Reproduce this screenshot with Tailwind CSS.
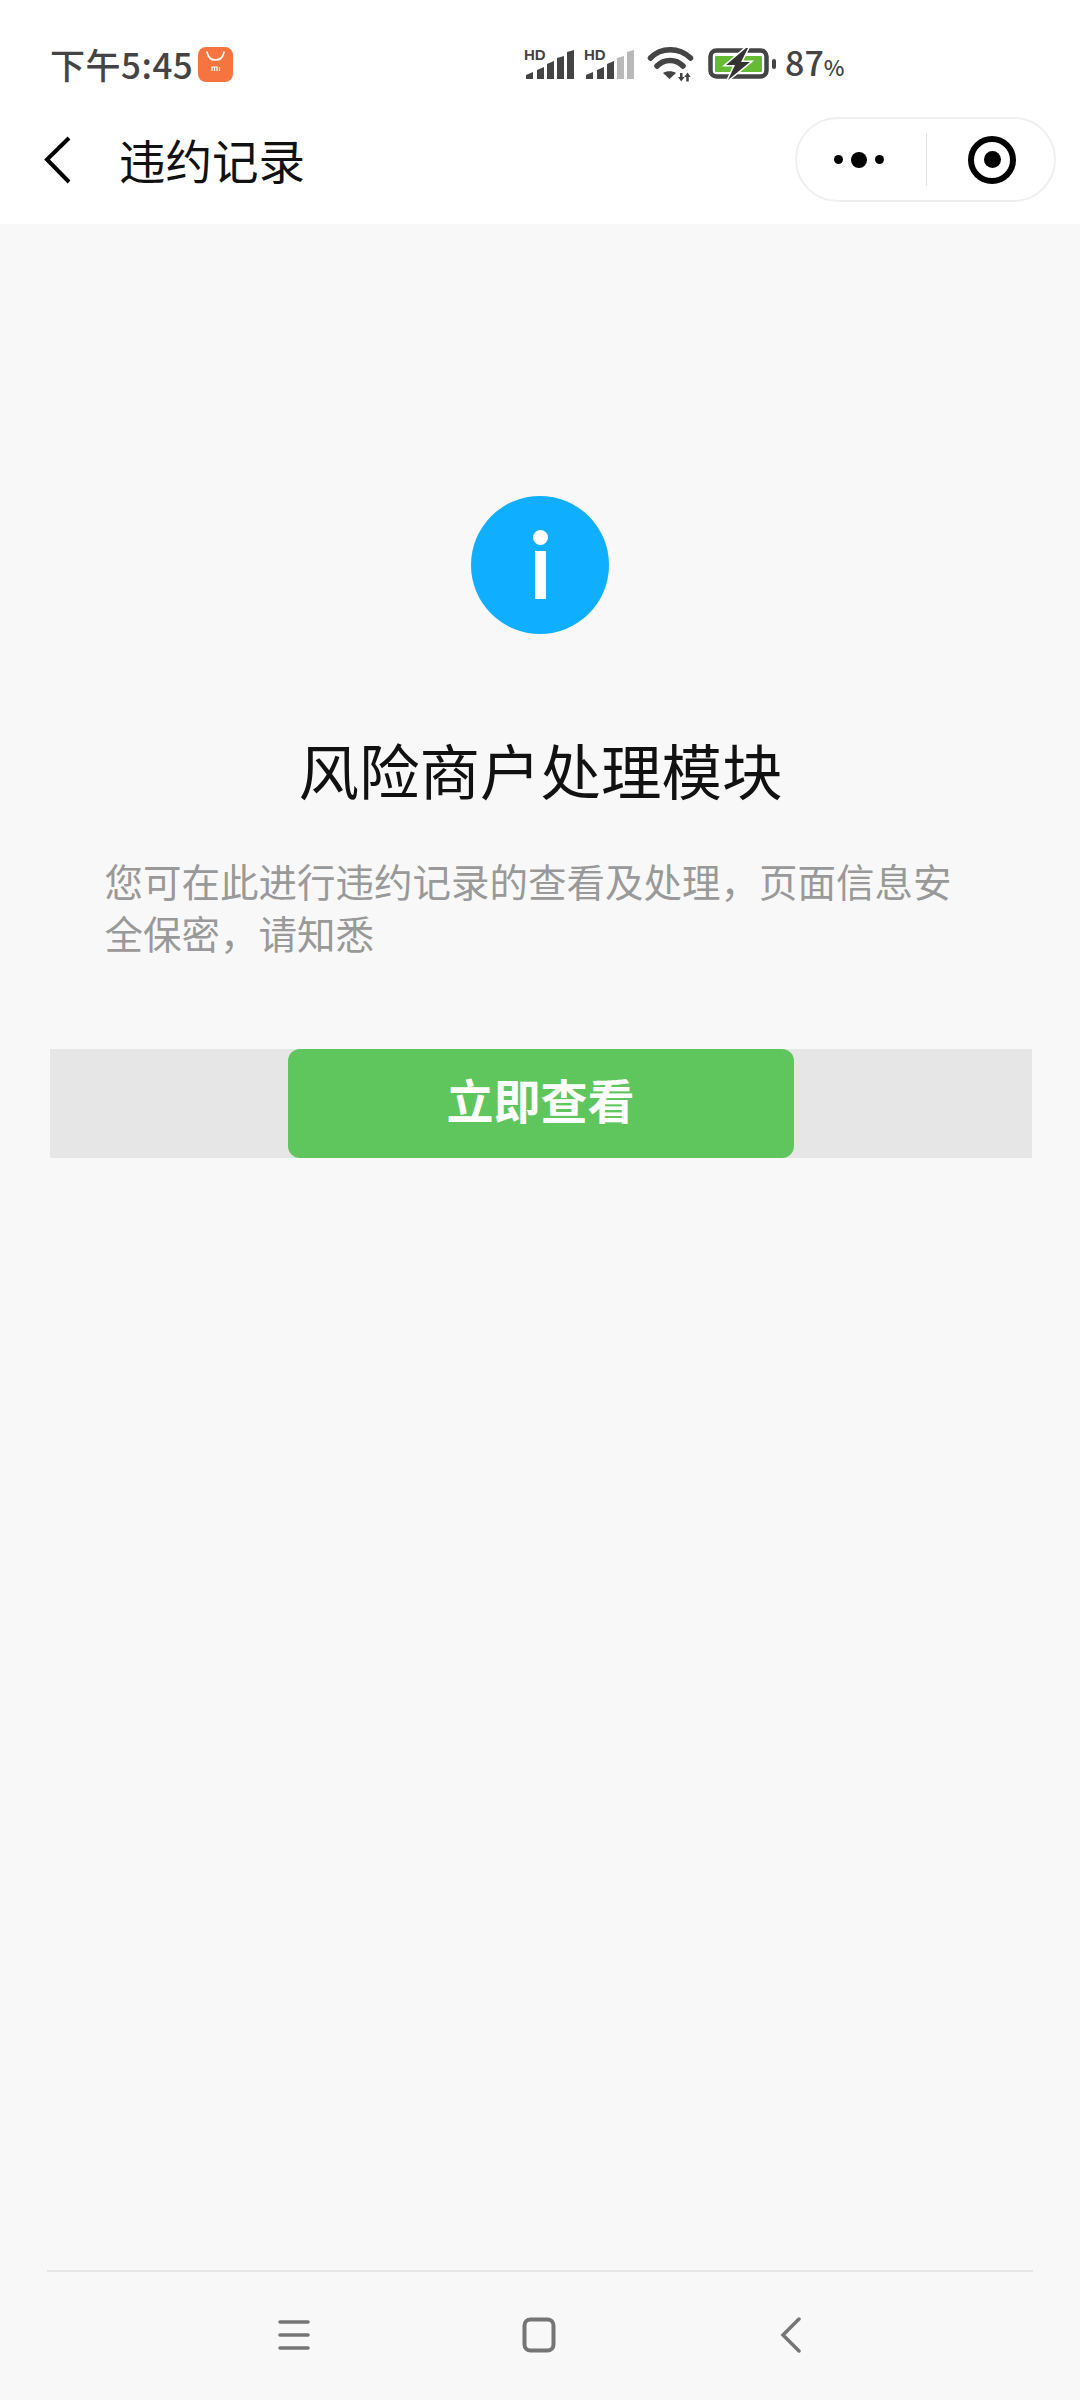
<!DOCTYPE html>
<html lang="zh-CN">
<head>
    <meta charset="UTF-8">
    <meta name="viewport" content="width=device-width, initial-scale=1.0">
    <title>违约记录</title>
    <script src="https://cdn.jsdelivr.net/npm/@tailwindcss/browser@4"></script>
</head>
<body class="bg-[#f8f8f8] font-['Noto_Sans_CJK_SC','Noto_Sans',sans-serif]">
    <div class="flex flex-col w-[1080px] h-[2400px]">

        <!-- status bar -->
        <div class="relative flex items-center h-[100px] bg-white pt-[28px] pl-[50px] text-[#444]">
            <span class="text-[35px] leading-[40px] tracking-[0.5px] font-medium">下午5:45</span>
            <svg class="ml-[5px]" width="35" height="35" viewBox="0 0 35 35">
                <rect width="35" height="35" rx="8" fill="#f57440"/>
                <path d="M9 5c1 6 4 8 8.500 8s7.500-2 8.500-8" fill="none" stroke="#fff" stroke-width="1.600" stroke-linecap="round"/>
                <path d="M14 24v-4h5v4M16.500 20v4M21.500 20v4" fill="none" stroke="#fff" stroke-width="1.200"/>
            </svg>
            <div class="flex items-start absolute left-[523px] top-[44px]">
                <svg width="52" height="36" viewBox="0 0 52 36">
                    <text x="1" y="16" font-size="15" font-weight="700" font-family="Liberation Sans" fill="#444">HD</text>
                    <g fill="#444">
                        <path d="M3 31l7-3v7H3z"/>
                        <path d="M14 26l7-3v12h-7z"/>
                        <path d="M24 20l7-3v18h-7z"/>
                        <path d="M34 14l7-2v23h-7z"/>
                        <path d="M44 8l7-2v29h-7z"/>
                    </g>
                </svg>
                <svg width="52" height="36" viewBox="0 0 52 36" class="ml-[8px]">
                    <text x="1" y="16" font-size="15" font-weight="700" font-family="Liberation Sans" fill="#444">HD</text>
                    <g fill="#444">
                        <path d="M3 31l7-3v7H3z"/>
                        <path d="M14 26l7-3v12h-7z"/>
                        <path d="M24 20l7-3v18h-7z"/>
                    </g>
                    <g fill="#b9b9b9">
                        <path d="M34 14l7-2v23h-7z"/>
                        <path d="M44 8l7-2v29h-7z"/>
                    </g>
                </svg>
                <svg width="48" height="38" viewBox="0 0 48 38" class="ml-[12px]">
                    <g fill="none" stroke="#444" stroke-width="5.500" stroke-linecap="round">
                        <path d="M3.500 14C14 3 32 3 43.500 14"/>
                        <path d="M10 22C17 14.500 29 14.500 36 22"/>
                    </g>
                    <path d="M16 29c3-2.500 10-2.500 13 0l-6.500 6z" fill="#444"/>
                    <path d="M33 29h2.500v4h2l-3.250 4.500L31 33h2zM40.500 28.500l3.250 4.500h-2v4.500h-2.500V33h-2z" fill="#444"/>
                </svg>
                <svg width="70" height="33" viewBox="0 0 70 33" class="ml-[13px] mt-[4px]">
                    <rect x="2.500" y="2.500" width="56" height="26" rx="6" fill="none" stroke="#444" stroke-width="4.500"/>
                    <rect x="7" y="8" width="47" height="16" rx="1" fill="#66bb35"/>
                    <path d="M38 0 18 17h9l-7 15 22-18h-9l7-14z" fill="#333" stroke="#fff" stroke-width="3" paint-order="stroke"/>
                    <rect x="64" y="11" width="4" height="10" rx="2" fill="#444"/>
                </svg>
                <span class="ml-[7px] text-[34px] leading-[36px] font-medium">87<span class="text-[22px]">%</span></span>
            </div>
        </div>

        <!-- nav -->
        <div class="relative flex items-center h-[124px] bg-white">
            <svg class="absolute left-[44px] top-[36px]" width="28" height="48" viewBox="0 0 28 48">
                <path d="M25 2 3 23.500 25 46" fill="none" stroke="#000" stroke-width="4"/>
            </svg>
            <span class="ml-[119px] mb-[6px] text-[46.500px] leading-[60px] text-[#111]">违约记录</span>
            <div class="absolute left-[795px] top-[17px] flex items-center w-[261px] h-[85px] rounded-full border-2 border-[#efefef] bg-white">
                <div class="flex items-center justify-center gap-[8px] w-[129px] pr-[5px]">
                    <span class="w-[9px] h-[9px] rounded-full bg-black"></span>
                    <span class="w-[16px] h-[16px] rounded-full bg-black"></span>
                    <span class="w-[9px] h-[9px] rounded-full bg-black"></span>
                </div>
                <span class="w-[1px] h-[53px] bg-[#e4e4e4]"></span>
                <div class="flex items-center justify-center flex-1 pl-[3px]">
                    <span class="flex items-center justify-center w-[48px] h-[48px] rounded-full border-[6px] border-black">
                        <span class="w-[17px] h-[17px] rounded-full bg-black"></span>
                    </span>
                </div>
            </div>
        </div>

        <!-- page content -->
        <main class="flex flex-col flex-1 items-center pt-[272px] pl-[1px]">
            <div class="flex flex-col items-center -ml-[1px] w-[138px] h-[138px] rounded-full bg-[#10aeff] pt-[34px]">
                <span class="w-[15px] h-[15px] rounded-full bg-white"></span>
                <span class="w-[11px] h-[48px] mt-[6px] bg-white"></span>
            </div>
            <h1 class="mt-[95px] text-[60.500px] leading-[80px] text-[#111]">风险商户处理模块</h1>
            <p class="mt-[45px] w-[872px] text-[38.500px] leading-[52px] text-[#999]">您可在此进行违约记录的查看及处理，页面信息安全保密，请知悉</p>
            <div class="flex justify-center mt-[91px] w-[982px] h-[109px] bg-[#e5e6e5]">
                <button class="w-[506px] h-[109px] rounded-[12px] bg-[#5fc65e] pb-[9px] text-[47px] font-bold text-white">立即查看</button>
            </div>
        </main>

        <!-- android nav bar -->
        <div class="flex items-center justify-center relative h-[130px] mx-[47px] border-t-2 border-[#e6e6e6]">
            <svg class="absolute left-[231px] top-[47px]" width="32" height="32" viewBox="0 0 32 32">
                <path d="M2 3h28M2 16h28M2 29h28" stroke="#757575" stroke-width="3.500" stroke-linecap="round"/>
            </svg>
            <svg class="absolute left-[475px] top-[45px]" width="34" height="36" viewBox="0 0 34 36">
                <rect x="2.500" y="2.500" width="29" height="31" rx="6" fill="none" stroke="#757575" stroke-width="4"/>
            </svg>
            <svg class="absolute left-[733px] top-[45px]" width="22" height="36" viewBox="0 0 22 36">
                <path d="M19 2 3 18l16 16" fill="none" stroke="#757575" stroke-width="3.500" stroke-linecap="round"/>
            </svg>
        </div>

    </div>
</body>
</html>
